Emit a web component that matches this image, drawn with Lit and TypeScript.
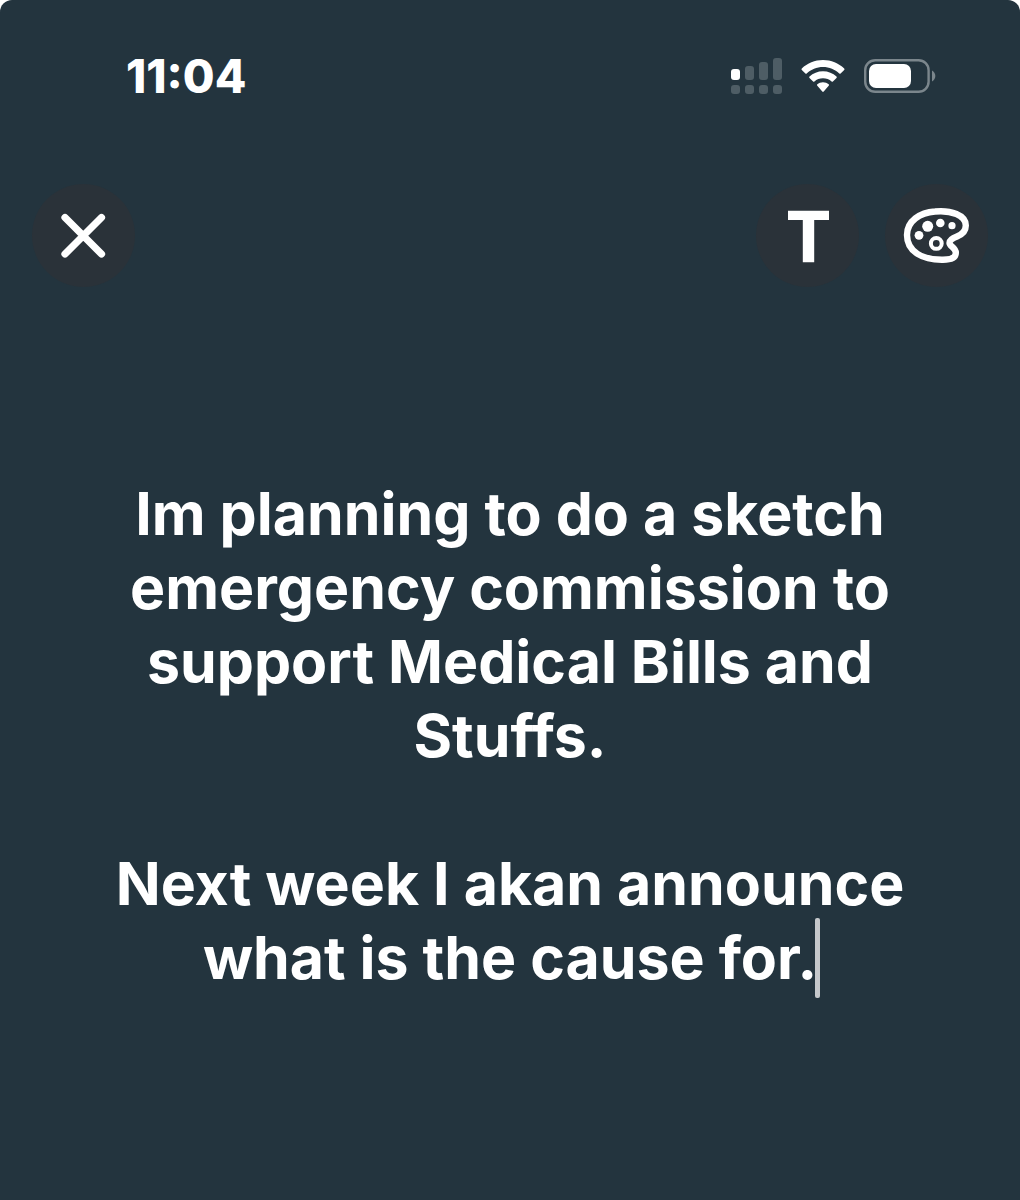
import { LitElement, html, css, svg } from "lit";
import { customElement, state } from "lit/decorators.js";

@customElement("status-bar")
export class StatusBar extends LitElement {
  static styles = css`
    :host {
      display: flex;
      justify-content: space-between;
      align-items: center;
      height: 56px;
      padding: 48px 84px 0 126px;
    }
    .time {
      font-size: 46px;
      line-height: 56px;
      font-weight: 800;
      font-feature-settings: "case";
    }
    .indicators {
      display: flex;
      align-items: center;
      gap: 19px;
    }
    svg {
      display: block;
    }
  `;

  render() {
    const columns = [0, 14, 28, 42];
    const heights = [11, 14, 18, 22];
    return html`
      <time class="time">11:04</time>
      <div class="indicators">
        <svg width="51" height="36" viewBox="0 0 51 36" role="img" aria-label="Signal">
          ${columns.map(
            (x, i) => svg`
              <rect x=${x} y=${22 - heights[i]} width="9" height=${heights[i]} rx="3"
                fill=${i === 0 ? "#fff" : "#4e5d65"}></rect>
              <rect x=${x} y="27" width="9" height="9" rx="3" fill="#4e5d65"></rect>`
          )}
        </svg>
        <svg width="44" height="34" viewBox="0 0 44 34" role="img" aria-label="Wi-Fi">
          <g fill="#fff">
            <path d="M22 1C30.200 1 37.600 4.200 43.200 9.500Q43.900 10.200 43.200 10.900L39.600 14.500Q39 15.100 38.300 14.500C34 10.300 28.300 7.900 22 7.900S10 10.300 5.700 14.500Q5 15.100 4.400 14.500L.8 10.900Q.1 10.200.8 9.500C6.400 4.200 13.800 1 22 1Z"></path>
            <path d="M22 12.300C27.200 12.300 31.900 14.300 35.500 17.500Q36.200 18.200 35.500 18.900L31.900 22.400Q31.300 23 30.600 22.400C28.300 20.400 25.300 19.200 22 19.200S15.700 20.400 13.400 22.400Q12.700 23 12.100 22.400L8.500 18.900Q7.800 18.200 8.500 17.500C12.100 14.300 16.800 12.300 22 12.300Z"></path>
            <path d="M22 23.200C24.200 23.200 26.200 24 27.700 25.300Q28.400 26 27.700 26.700L22.700 32.600Q22 33.300 21.300 32.600L16.300 26.700Q15.600 26 16.300 25.300C17.800 24 19.800 23.200 22 23.200Z"></path>
          </g>
        </svg>
        <svg width="72" height="34" viewBox="0 0 72 34" role="img" aria-label="Battery">
          <rect x="1.200" y="1.200" width="63.400" height="31.600" rx="10" fill="none" stroke="#7b868c" stroke-width="2.400"></rect>
          <rect x="5" y="5" width="42" height="24" rx="7" fill="#fff"></rect>
          <path d="M68 11.500C70 12.500 71.300 14.500 71.300 17S70 21.500 68 22.500Z" fill="#7b868c"></path>
        </svg>
      </div>
    `;
  }
}

@customElement("status-editor")
export class StatusEditor extends LitElement {
  @state() private text =
    "Im planning to do a sketch emergency commission to support Medical Bills and Stuffs.\n\nNext week I akan announce what is the cause for.";

  static styles = css`
    :host {
      display: block;
      padding: 0 100px;
    }
    .field {
      display: grid;
    }
    .input,
    .sizer {
      grid-area: 1 / 1;
      box-sizing: border-box;
      width: 100%;
      margin: 0;
      padding: 0;
      border: 0;
      font: inherit;
      font-size: 59px;
      line-height: 74px;
      font-weight: 680;
      font-variant-ligatures: none;
      text-align: center;
      white-space: pre-wrap;
      overflow-wrap: break-word;
    }
    .input {
      display: block;
      background: none;
      color: #fff;
      resize: none;
      overflow: hidden;
      outline: none;
      caret-color: transparent;
    }
    .sizer {
      visibility: hidden;
      pointer-events: none;
    }
    .end {
      position: relative;
    }
    .caret {
      position: absolute;
      left: -2px;
      bottom: -5px;
      width: 5px;
      height: 80px;
      border-radius: 2px;
      background: #c5c8cb;
      visibility: visible;
    }
  `;

  private onInput(e: Event) {
    this.text = (e.target as HTMLTextAreaElement).value;
  }

  render() {
    return html`
      <div class="field">
        <textarea
          class="input"
          aria-label="Status text"
          spellcheck="false"
          .value=${this.text}
          @input=${this.onInput}
        ></textarea>
        <div class="sizer" aria-hidden="true">${this.text}<span class="end"><span class="caret"></span></span></div>
      </div>
    `;
  }
}

@customElement("app-root")
export class AppRoot extends LitElement {
  static styles = css`
    :host {
      display: block;
      box-sizing: border-box;
      min-height: 100vh;
      background: #23343e;
      border-radius: 12px 12px 0 0;
      color: #fff;
      font-family: Inter, "Liberation Sans", sans-serif;
    }
    .toolbar {
      display: flex;
      justify-content: space-between;
      padding: 80px 32px 0;
    }
    .tools {
      display: flex;
      gap: 26px;
    }
    .tool {
      display: grid;
      place-items: center;
      width: 103px;
      height: 103px;
      padding: 0;
      border: 0;
      border-radius: 50%;
      background: #2a3239;
      color: inherit;
      font: inherit;
      cursor: pointer;
    }
    .tool svg {
      display: block;
    }
    .editor {
      padding-top: 190px;
    }
  `;

  render() {
    return html`
      <status-bar></status-bar>
      <header class="toolbar">
        <button class="tool" type="button" aria-label="Close">
          <svg width="103" height="103" viewBox="0 0 103 103">
            <path d="M33 33.500L69.500 70M69.500 33.500L33 70" stroke="#fff" stroke-width="7.200" stroke-linecap="round"></path>
          </svg>
        </button>
        <div class="tools">
          <button class="tool" type="button" aria-label="Change font">
            <svg width="103" height="103" viewBox="0 0 103 103">
              <path d="M32 26.700H73V36H58.200V78.300H46.800V36H32Z" fill="#fff"></path>
            </svg>
          </button>
          <button class="tool" type="button" aria-label="Change background colour">
            <svg width="103" height="103" viewBox="0 0 103 103">
              <path d="M50 27.500C66 26 80.800 31 80.800 41.500C80.800 47 77 50.500 72 52.500C67 54.500 64.500 56 64.500 59C64.500 62.500 71 63.500 70.800 69C70.600 74.500 65 75.700 58 75.700C38 76 22 68 22 51C22 37 35 28.500 50 27.500Z" fill="none" stroke="#fff" stroke-width="6.400" stroke-linejoin="round"></path>
              <g fill="#fff">
                <circle cx="34" cy="51.300" r="4.400"></circle>
                <circle cx="42.700" cy="42.300" r="5.500"></circle>
                <circle cx="55.300" cy="39" r="4.300"></circle>
                <circle cx="67" cy="41.700" r="3.600"></circle>
              </g>
              <circle cx="51.300" cy="59.400" r="5.400" fill="none" stroke="#fff" stroke-width="4"></circle>
            </svg>
          </button>
        </div>
      </header>
      <main class="editor"><status-editor></status-editor></main>
    `;
  }
}
